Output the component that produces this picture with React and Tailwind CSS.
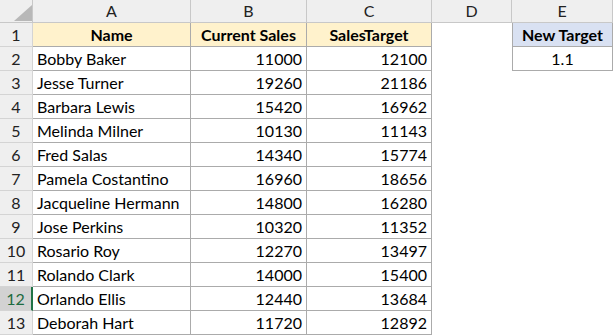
const rows = [
  ["Bobby Baker", 11000, 12100],
  ["Jesse Turner", 19260, 21186],
  ["Barbara Lewis", 15420, 16962],
  ["Melinda Milner", 10130, 11143],
  ["Fred Salas", 14340, 15774],
  ["Pamela Costantino", 16960, 18656],
  ["Jacqueline Hermann", 14800, 16280],
  ["Jose Perkins", 10320, 11352],
  ["Rosario Roy", 12270, 13497],
  ["Rolando Clark", 14000, 15400],
  ["Orlando Ellis", 12440, 13684],
  ["Deborah Hart", 11720, 12892],
];

const cols = ["A", "B", "C", "D", "E"];

function RowHead({ n, active }) {
  return (
    <div
      className={
        "flex items-center justify-center border-b border-r border-[#d4d4d4] text-[16px] " +
        (active
          ? "bg-[#d2d2d2] text-[#1d6b40] border-r-2 border-r-[#217346]"
          : "bg-[#efefef] text-[#222]")
      }
    >
      {n}
    </div>
  );
}

export default function App() {
  return (
    <div
      className="w-[614px] h-[336px] bg-white overflow-hidden text-black"
      style={{ fontFamily: "Lato, 'Liberation Sans', sans-serif" }}
    >
      <div className="grid grid-cols-[33px_158px_116px_125px_80px_101px] grid-rows-[23px_repeat(13,24px)]">
        {/* Column headers */}
        <div className="relative bg-[#efefef] border-b border-r border-[#c8c8c8]">
          <svg className="absolute left-[14px] top-[5px]" width="18" height="16" viewBox="0 0 18 16">
            <polygon points="18,0 18,16 0,16" fill="#b8b8b8" />
          </svg>
        </div>
        {cols.map((c) => (
          <div
            key={c}
            className="flex items-center justify-center bg-[#efefef] border-b border-r border-[#c8c8c8] text-[16px] text-[#222]"
          >
            {c}
          </div>
        ))}

        {/* Row 1 */}
        <RowHead n={1} />
        <div className="flex items-center justify-center bg-[#fff2cc] border-b border-r border-[#ababab] font-bold text-[16px]">
          Name
        </div>
        <div className="flex items-center justify-center bg-[#fff2cc] border-b border-r border-[#ababab] font-bold text-[16px]">
          Current Sales
        </div>
        <div className="flex items-center justify-center bg-[#fff2cc] border-b border-r border-[#ababab] font-bold text-[16px]">
          SalesTarget
        </div>
        <div />
        <div className="flex items-center justify-center bg-[#d9e1f2] border-b border-r border-l border-[#ababab] font-bold text-[16px]">
          New Target
        </div>

        {rows.map(([name, cur, target], i) => {
          const n = i + 2;
          return [
            <RowHead key={"h" + n} n={n} active={n === 12} />,
            <div key={"a" + n} className="flex items-center pl-[4px] border-b border-r border-[#ababab] text-[16px]">
              {name}
            </div>,
            <div key={"b" + n} className="flex items-center justify-end pr-[4px] border-b border-r border-[#ababab] text-[16px]">
              {cur}
            </div>,
            <div key={"c" + n} className="flex items-center justify-end pr-[4px] border-b border-r border-[#ababab] text-[16px]">
              {target}
            </div>,
            <div key={"d" + n} />,
            n === 2 ? (
              <div key={"e" + n} className="flex items-center justify-center border-b border-r border-l border-[#ababab] text-[16px]">
                1.1
              </div>
            ) : (
              <div key={"e" + n} />
            ),
          ];
        })}
      </div>
    </div>
  );
}
